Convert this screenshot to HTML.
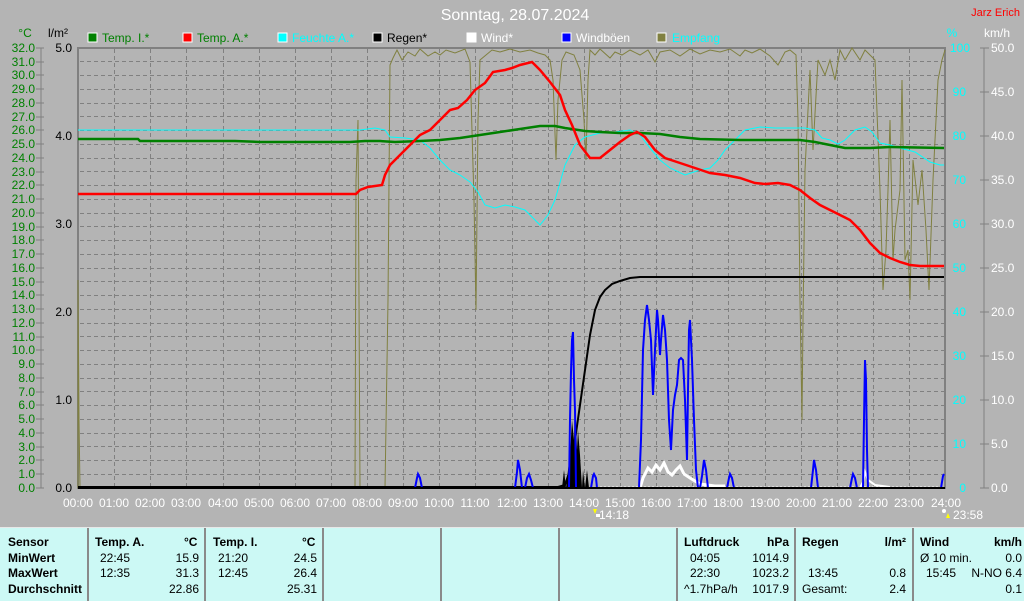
<!DOCTYPE html>
<html><head><meta charset="utf-8"><style>
html,body{margin:0;padding:0;background:#b4b4b4;}
body{width:1024px;height:600px;overflow:hidden;position:relative;font-family:"Liberation Sans",sans-serif;}
svg{position:absolute;left:0;top:0;}
.tb{position:absolute;left:0;top:527px;width:1024px;height:73px;background:#ccf9f5;border-top:1px solid #e8e8e8;}
.col{position:absolute;top:0;height:73px;border-left:2px solid #8a8a8a;}
.t{position:absolute;font-size:12px;color:#000;white-space:nowrap;}
.b{font-weight:bold;}
</style></head><body>
<svg width="1024" height="528" viewBox="0 0 1024 528" font-family="Liberation Sans, sans-serif">
<rect width="1024" height="528" fill="#b4b4b4"/>
<text x="515" y="20" fill="#fff" font-size="16" text-anchor="middle">Sonntag, 28.07.2024</text>
<text x="1020" y="16" fill="#f00" font-size="11" text-anchor="end">Jarz Erich</text>
<g font-size="12">
<rect x="88" y="33" width="9" height="9" fill="#008000" stroke="#fff"/><text x="102" y="42" fill="#008000">Temp. I.*</text>
<rect x="183" y="33" width="9" height="9" fill="#f00" stroke="#fff"/><text x="197" y="42" fill="#008000">Temp. A.*</text>
<rect x="278" y="33" width="9" height="9" fill="#0ff" stroke="#fff"/><text x="292" y="42" fill="#0ff">Feuchte A.*</text>
<rect x="373" y="33" width="9" height="9" fill="#000" stroke="#fff"/><text x="387" y="42" fill="#000">Regen*</text>
<rect x="467" y="33" width="9" height="9" fill="#fff" stroke="#fff"/><text x="481" y="42" fill="#fff">Wind*</text>
<rect x="562" y="33" width="9" height="9" fill="#00f" stroke="#fff"/><text x="576" y="42" fill="#fff">Windböen</text>
<rect x="657" y="33" width="9" height="9" fill="#808040" stroke="#fff"/><text x="672" y="42" fill="#0ff">Empfang</text>
</g>
<text x="25" y="37" fill="#008000" font-size="12" text-anchor="middle">°C</text>
<text x="58" y="37" fill="#000" font-size="12" text-anchor="middle">l/m²</text>
<text x="952" y="37" fill="#0ff" font-size="12" text-anchor="middle">%</text>
<text x="997" y="37" fill="#fff" font-size="12" text-anchor="middle">km/h</text>
<g stroke="#808080" stroke-width="1" stroke-dasharray="4,3">
<path d="M114.5 49V488M150.5 49V488M186.5 49V488M223.5 49V488M259.5 49V488M295.5 49V488M331.5 49V488M367.5 49V488M403.5 49V488M439.5 49V488M475.5 49V488M512.5 49V488M548.5 49V488M584.5 49V488M620.5 49V488M656.5 49V488M692.5 49V488M728.5 49V488M765.5 49V488M801.5 49V488M837.5 49V488M873.5 49V488M909.5 49V488"/>
<path d="M80 474.5H944M80 460.5H944M80 446.5H944M80 433.5H944M80 419.5H944M80 405.5H944M80 391.5H944M80 378.5H944M80 364.5H944M80 350.5H944M80 336.5H944M80 323.5H944M80 309.5H944M80 295.5H944M80 281.5H944M80 268.5H944M80 254.5H944M80 240.5H944M80 226.5H944M80 213.5H944M80 199.5H944M80 185.5H944M80 171.5H944M80 158.5H944M80 144.5H944M80 130.5H944M80 116.5H944M80 103.5H944M80 89.5H944M80 75.5H944M80 61.5H944"/>
</g>
<path d="M78 489V48H945V489" fill="none" stroke="#808080" stroke-width="2"/>
<path d="M41 48V488M36 48H44M36 474H44M36 460H44M36 447H44M36 433H44M36 419H44M36 405H44M36 392H44M36 378H44M36 364H44M36 350H44M36 337H44M36 323H44M36 309H44M36 295H44M36 282H44M36 268H44M36 254H44M36 240H44M36 227H44M36 213H44M36 199H44M36 185H44M36 172H44M36 158H44M36 144H44M36 130H44M36 117H44M36 103H44M36 89H44M36 75H44M36 62H44M36 488H44" stroke="#808080" fill="none"/>
<g fill="#008000" font-size="12" text-anchor="end">
<text x="35" y="52">32.0</text><text x="35" y="66">31.0</text><text x="35" y="79">30.0</text><text x="35" y="93">29.0</text><text x="35" y="107">28.0</text><text x="35" y="121">27.0</text><text x="35" y="134">26.0</text><text x="35" y="148">25.0</text><text x="35" y="162">24.0</text><text x="35" y="176">23.0</text><text x="35" y="189">22.0</text><text x="35" y="203">21.0</text><text x="35" y="217">20.0</text><text x="35" y="231">19.0</text><text x="35" y="244">18.0</text><text x="35" y="258">17.0</text><text x="35" y="272">16.0</text><text x="35" y="286">15.0</text><text x="35" y="299">14.0</text><text x="35" y="313">13.0</text><text x="35" y="327">12.0</text><text x="35" y="341">11.0</text><text x="35" y="354">10.0</text><text x="35" y="368">9.0</text><text x="35" y="382">8.0</text><text x="35" y="396">7.0</text><text x="35" y="409">6.0</text><text x="35" y="423">5.0</text><text x="35" y="437">4.0</text><text x="35" y="451">3.0</text><text x="35" y="464">2.0</text><text x="35" y="478">1.0</text><text x="35" y="492">0.0</text>
</g>
<g fill="#000" font-size="12" text-anchor="end">
<text x="72" y="52">5.0</text><text x="72" y="140">4.0</text><text x="72" y="228">3.0</text><text x="72" y="316">2.0</text><text x="72" y="404">1.0</text><text x="72" y="492">0.0</text>
</g>
<g fill="#0ff" font-size="12" text-anchor="end">
<text x="970" y="52">100</text><text x="966" y="96">90</text><text x="966" y="140">80</text><text x="966" y="184">70</text><text x="966" y="228">60</text><text x="966" y="272">50</text><text x="966" y="316">40</text><text x="966" y="360">30</text><text x="966" y="404">20</text><text x="966" y="448">10</text><text x="966" y="492">0</text>
</g>
<path d="M984 48V488M980 48H989M980 92H989M980 136H989M980 180H989M980 224H989M980 268H989M980 312H989M980 356H989M980 400H989M980 444H989M980 488H989" stroke="#808080" fill="none"/>
<g fill="#fff" font-size="12">
<text x="991" y="52">50.0</text><text x="991" y="96">45.0</text><text x="991" y="140">40.0</text><text x="991" y="184">35.0</text><text x="991" y="228">30.0</text><text x="991" y="272">25.0</text><text x="991" y="316">20.0</text><text x="991" y="360">15.0</text><text x="991" y="404">10.0</text><text x="991" y="448">5.0</text><text x="991" y="492">0.0</text>
</g>
<polyline fill="none" stroke="#808040" stroke-width="1" points="78,488 78,280 79,420 80,488 355,488 356,180 358,120 359,300 360,488 367,488 385,488 388,300 390,65 393,58 397,50 402,60 408,52 415,56 420,49 428,56 435,52 440,55 446,50 455,53 465,49 470,62 474,200 476,310 478,120 480,60 486,55 492,50 500,52 510,49 520,52 530,50 538,53 545,55 550,60 553,80 556,160 558,100 562,60 566,52 574,55 580,70 584,120 586,160 588,80 590,50 595,55 600,49 610,58 615,52 622,55 630,50 640,55 648,50 655,62 660,52 670,50 680,56 690,49 700,54 710,50 720,52 730,49 740,56 745,50 752,53 760,49 770,56 778,65 785,52 790,50 796,55 798,120 800,300 802,420 803,320 805,170 810,70 813,150 818,60 825,75 830,60 835,80 840,50 845,60 852,48 860,60 865,50 875,60 880,190 883,290 886,250 888,190 890,120 893,260 895,230 900,190 902,80 905,260 908,250 910,300 913,160 918,205 922,170 926,230 929,290 933,180 936,120 938,80 942,60 945,50"/>
<polyline fill="none" stroke="#0ff" stroke-width="1" points="78,130 355,130 360,130 375,128 385,130 390,137 405,138 420,140 430,148 440,160 450,170 460,175 470,182 478,192 485,205 495,208 505,205 515,207 525,210 535,220 540,225 548,215 555,200 565,165 575,145 585,137 600,133 615,132 630,130 640,135 650,148 660,160 670,168 685,175 700,170 710,168 718,160 725,150 735,140 745,130 760,127 775,128 790,128 805,128 815,130 822,138 830,140 838,144 845,140 855,130 865,127 872,132 880,143 890,145 900,148 915,152 930,162 940,165 944,165"/>
<polyline fill="none" stroke="#008000" stroke-width="2.5" points="78,139 138,139 140,141 235,141 260,142 350,142 365,141 380,141 395,142 420,141 440,140 460,138 480,135 500,132 520,129 540,126 555,126 565,128 585,131 600,132 620,133 640,133 660,134 680,137 700,139 740,140 800,140 815,142 830,145 845,148 870,148 890,147 944,148"/>
<polyline fill="none" stroke="#f00" stroke-width="2.5" points="78,194 356,194 360,190 368,187 382,185 385,175 390,165 400,155 410,145 420,135 430,130 440,120 450,110 458,108 467,100 475,90 485,83 493,72 505,70 512,68 520,65 532,62 540,70 550,82 560,95 565,110 572,125 580,145 590,158 600,158 610,150 620,142 630,135 637,132 645,137 655,150 665,158 680,163 695,168 710,173 725,175 740,178 755,183 765,184 778,183 790,185 800,190 810,198 820,205 830,210 840,215 850,220 860,230 870,243 880,253 890,258 900,262 910,265 920,266 935,266 944,266"/>
<path fill="#000" d="M562 488L564 470L566 488L568 470L570 455L572 420L574 440L575 400L577 450L578 430L580 455L582 488L583 470L585 488L587 470L589 488Z"/>
<polyline fill="none" stroke="#000" stroke-width="2" points="78,487 558,487 565,485 570,470 575,440 580,405 585,370 590,335 595,310 600,297 605,290 612,284 620,281 630,278 640,277 944,277"/>
<path d="M596 487H944" stroke="#fff" stroke-width="1" stroke-dasharray="2,2"/>
<polyline fill="none" stroke="#fff" stroke-width="3" points="640,488 643,478 648,468 652,472 656,465 660,470 664,463 668,472 672,475 676,470 680,466 684,474 690,478 700,484 715,486 725,486"/>
<polyline fill="none" stroke="#fff" stroke-width="2" points="860,488 863,482 865,472 868,480 875,485 890,487"/>
<g fill="none" stroke="#00f" stroke-width="2">
<polyline points="415,488 417,478 418,474 420,478 422,488"/>
<polyline points="515,488 517,472 518,460 520,470 522,488 525,488 527,478 529,474 531,480 533,488"/>
<polyline points="569,488 570,420 571,372 572,340 573,332 574,380 575,410 576,488"/>
<polyline points="591,488 593,476 594,474 596,478 597,488"/>
<polyline points="639,488 641,440 643,350 645,320 647,305 649,320 651,340 653,395 655,350 657,310 658,320 660,355 661,340 663,315 665,330 667,360 669,420 671,450 673,410 675,395 677,385 679,360 681,358 683,360 685,400 687,460 688,390 689,330 690,320 692,360 694,420 696,470 698,488 700,488 702,476 704,460 706,470 708,488"/>
<polyline points="727,488 729,478 730,474 732,478 734,488"/>
<polyline points="811,488 813,470 814,460 816,470 818,488"/>
<polyline points="850,488 852,478 853,474 855,478 857,488"/>
<polyline points="863,488 864,420 865,360 866,380 867,450 868,488"/>
<polyline points="941,488 943,476 944,474"/>
</g>
<path d="M78 488H945" stroke="#000" stroke-width="2"/>
<g fill="#fff" font-size="12" text-anchor="middle">
<text x="78" y="507">00:00</text><text x="114" y="507">01:00</text><text x="150" y="507">02:00</text><text x="186" y="507">03:00</text><text x="223" y="507">04:00</text><text x="259" y="507">05:00</text><text x="295" y="507">06:00</text><text x="331" y="507">07:00</text><text x="367" y="507">08:00</text><text x="403" y="507">09:00</text><text x="439" y="507">10:00</text><text x="475" y="507">11:00</text><text x="512" y="507">12:00</text><text x="548" y="507">13:00</text><text x="584" y="507">14:00</text><text x="620" y="507">15:00</text><text x="656" y="507">16:00</text><text x="692" y="507">17:00</text><text x="728" y="507">18:00</text><text x="765" y="507">19:00</text><text x="801" y="507">20:00</text><text x="837" y="507">21:00</text><text x="873" y="507">22:00</text><text x="909" y="507">23:00</text><text x="946" y="507">24:00</text>
<text x="599" y="519" text-anchor="start">14:18</text><text x="953" y="519" text-anchor="start">23:58</text>
</g>
<path d="M593 509L597 509L595 514Z" fill="#ff0"/><rect x="596" y="514" width="4" height="3" fill="#fff"/>
<path d="M946 518L950 518L948 513Z" fill="#ff0"/><circle cx="944" cy="511" r="2" fill="#fff"/>
</svg>
<div class="tb">
<div class="col" style="left:87px"></div><div class="col" style="left:204px"></div><div class="col" style="left:322px"></div><div class="col" style="left:440px"></div><div class="col" style="left:558px"></div><div class="col" style="left:676px"></div><div class="col" style="left:794px"></div><div class="col" style="left:912px"></div>
<div class="t b" style="left:8px;top:7px">Sensor</div>
<div class="t b" style="left:8px;top:23px">MinWert</div>
<div class="t b" style="left:8px;top:38px">MaxWert</div>
<div class="t b" style="left:8px;top:54px">Durchschnitt</div>
<div class="t b" style="left:95px;top:7px">Temp. A.</div><div class="t b" style="left:184px;top:7px">°C</div>
<div class="t" style="left:100px;top:23px">22:45</div><div class="t" style="right:825px;top:23px">15.9</div>
<div class="t" style="left:100px;top:38px">12:35</div><div class="t" style="right:825px;top:38px">31.3</div>
<div class="t" style="right:825px;top:54px">22.86</div>
<div class="t b" style="left:213px;top:7px">Temp. I.</div><div class="t b" style="left:302px;top:7px">°C</div>
<div class="t" style="left:218px;top:23px">21:20</div><div class="t" style="right:707px;top:23px">24.5</div>
<div class="t" style="left:218px;top:38px">12:45</div><div class="t" style="right:707px;top:38px">26.4</div>
<div class="t" style="right:707px;top:54px">25.31</div>
<div class="t b" style="left:684px;top:7px">Luftdruck</div><div class="t b" style="right:235px;top:7px">hPa</div>
<div class="t" style="left:690px;top:23px">04:05</div><div class="t" style="right:235px;top:23px">1014.9</div>
<div class="t" style="left:690px;top:38px">22:30</div><div class="t" style="right:235px;top:38px">1023.2</div>
<div class="t" style="left:684px;top:54px">^1.7hPa/h</div><div class="t" style="right:235px;top:54px">1017.9</div>
<div class="t b" style="left:802px;top:7px">Regen</div><div class="t b" style="right:118px;top:7px">l/m²</div>
<div class="t" style="left:808px;top:38px">13:45</div><div class="t" style="right:118px;top:38px">0.8</div>
<div class="t" style="left:802px;top:54px">Gesamt:</div><div class="t" style="right:118px;top:54px">2.4</div>
<div class="t b" style="left:920px;top:7px">Wind</div><div class="t b" style="right:2px;top:7px">km/h</div>
<div class="t" style="left:920px;top:23px">Ø 10 min.</div><div class="t" style="right:2px;top:23px">0.0</div>
<div class="t" style="left:926px;top:38px">15:45</div><div class="t" style="right:2px;top:38px">N-NO 6.4</div>
<div class="t" style="right:2px;top:54px">0.1</div>
</div>
</body></html>
